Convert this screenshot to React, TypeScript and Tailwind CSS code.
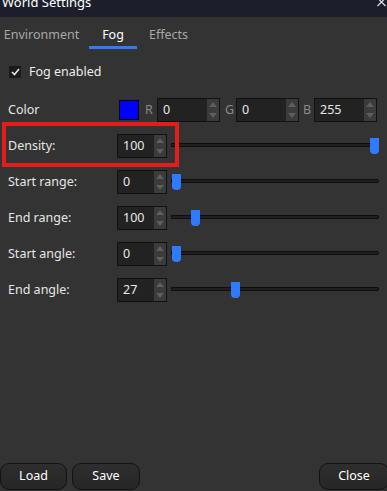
import React from "react";

const font = { fontFamily: '"Noto Sans", "Open Sans", sans-serif' };

function Spinner() {
  return (
    <div className="flex h-full w-[12px] flex-col bg-[#3b3b3b]">
      <div className="flex flex-1 items-center justify-center">
        <svg width="8" height="5" viewBox="0 0 8 5">
          <path d="M0 5 L4 0 L8 5 Z" fill="#5e5e5e" />
        </svg>
      </div>
      <div className="flex flex-1 items-center justify-center">
        <svg width="8" height="5" viewBox="0 0 8 5">
          <path d="M0 0 L4 5 L8 0 Z" fill="#5e5e5e" />
        </svg>
      </div>
    </div>
  );
}

function NumInput({ value, w }: { value: string; w: string }) {
  return (
    <div className={`flex h-[24px] ${w} border border-[#111111] bg-[#222222]`}>
      <div className="flex flex-1 items-center pl-[5px] text-[12.5px] text-[#e8e8e8]">{value}</div>
      <Spinner />
    </div>
  );
}

function Slider({ left }: { left: number }) {
  return (
    <div className="relative ml-[4px] h-[24px] w-[208px]">
      <div className="absolute left-0 right-0 top-[9px] h-[4px] rounded-r-full border border-[#0d0d0d] bg-[#202020]" />
      <div
        className="absolute top-[4px] h-[16px] w-[9px] rounded-b-[4px] bg-[#2f7bff]"
        style={{ left }}
      />
    </div>
  );
}

function Row({ label, value, thumb, children }: { label: string; value: string; thumb: number; children?: React.ReactNode }) {
  return (
    <div className="relative flex h-[24px] items-center">
      <div className="w-[117px] pl-[8px] text-[12.5px] text-[#e6e6e6]">{label}</div>
      <NumInput value={value} w="w-[50px]" />
      <Slider left={thumb} />
      {children}
    </div>
  );
}

export default function App() {
  return (
    <div className="flex h-[491px] w-[387px] flex-col overflow-hidden bg-[#333333]" style={font}>
      <div className="relative h-[17px] shrink-0 overflow-hidden bg-[#1c1f2b]">
        <div className="mt-[-7px] pl-[2px] text-[13px] leading-[18px] text-white">World Settings</div>
        <svg className="absolute right-[1px] top-[-1px]" width="9" height="8" viewBox="0 0 9 8">
          <path d="M0.5 -1 L8.5 7 M8.5 -1 L0.5 7" stroke="#e0e0e0" strokeWidth="1.2" />
        </svg>
      </div>

      <div className="flex h-[32px] shrink-0">
        <div className="flex w-[83px] items-center justify-center border-b-[3px] border-transparent pt-[7px] text-[12.5px] text-[#a8a8a8]">
          Environment
        </div>
        <div className="ml-[6px] flex w-[48px] items-center justify-center border-b-[3px] border-[#2f7bff] pt-[7px] text-[12.5px] text-white">
          Fog
        </div>
        <div className="flex w-[63px] items-center justify-center border-b-[3px] border-transparent pt-[7px] text-[12.5px] text-[#a8a8a8]">
          Effects
        </div>
      </div>

      <div className="mt-[13px] flex h-[20px] items-center pl-[9px]">
        <div className="flex h-[12px] w-[12px] items-center justify-center bg-[#1a1a1a]">
          <svg width="9" height="8" viewBox="0 0 9 8">
            <path d="M1 4 L3.5 6.5 L8 1" stroke="#e8e8e8" strokeWidth="1.6" fill="none" />
          </svg>
        </div>
        <div className="ml-[8px] text-[12.5px] text-[#ececec]">Fog enabled</div>
      </div>

      <div className="mt-[16px] flex h-[24px] items-center">
        <div className="w-[119px] pl-[8px] text-[12.5px] text-[#e6e6e6]">Color</div>
        <div className="h-[20px] w-[20px] border border-black bg-[#0000ff]" />
        <div className="ml-[6px] w-[12px] text-[12.5px] text-[#8a8a8a]">R</div>
        <NumInput value="0" w="w-[63px]" />
        <div className="ml-[5px] w-[11px] text-[12.5px] text-[#8a8a8a]">G</div>
        <NumInput value="0" w="w-[63px]" />
        <div className="ml-[4px] w-[11px] text-[12.5px] text-[#8a8a8a]">B</div>
        <NumInput value="255" w="w-[63px]" />
      </div>

      <div className="mt-[12px] flex flex-col gap-[12px]">
        <Row label="Density:" value="100" thumb={199}>
          <div className="pointer-events-none absolute left-[2px] top-[-12px] h-[45px] w-[177px] border-4 border-[#e31c1c]" />
        </Row>
        <Row label="Start range:" value="0" thumb={1} />
        <Row label="End range:" value="100" thumb={20} />
        <Row label="Start angle:" value="0" thumb={1} />
        <Row label="End angle:" value="27" thumb={60} />
      </div>

      <div className="flex-1" />

      <div className="mb-[1px] flex h-[27px] shrink-0">
        <button className="h-full w-[67px] rounded-[9px] border border-[#121212] bg-gradient-to-b from-[#2e2e2e] to-[#262626] text-[12.5px] text-white">
          Load
        </button>
        <button className="ml-[5px] h-full w-[68px] rounded-[9px] border border-[#121212] bg-gradient-to-b from-[#2e2e2e] to-[#262626] text-[12.5px] text-white">
          Save
        </button>
        <div className="flex-1" />
        <button className="mr-[-2px] h-full w-[70px] rounded-[9px] border border-[#121212] bg-gradient-to-b from-[#2e2e2e] to-[#262626] text-[12.5px] text-white">
          Close
        </button>
      </div>
    </div>
  );
}
